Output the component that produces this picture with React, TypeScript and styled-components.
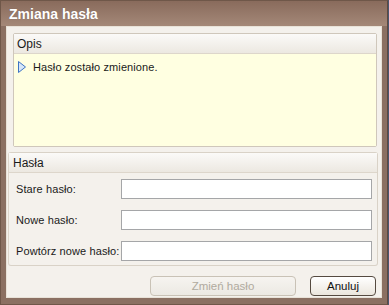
import styled, { createGlobalStyle } from 'styled-components';

const GlobalStyle = createGlobalStyle`
  html, body {
    margin: 0;
    padding: 0;
    background: #4b5670;
  }
  body {
    font-family: 'Liberation Sans', Arial, sans-serif;
    font-size: 12px;
    color: #1a1a1a;
  }
`;

const Window = styled.div`
  width: 388px;
  height: 305px;
  box-sizing: border-box;
  display: flex;
  flex-direction: column;
  background: #8b7062;
  border: 1px solid #6f5749;
  border-right-color: #5e4a3f;
  padding: 0 5px 6px 5px;
`;

const TitleBar = styled.div`
  height: 25px;
  margin: 0 -5px;
  padding: 0 8px;
  display: flex;
  align-items: center;
  background: linear-gradient(#896b5c, #a48878);
  color: #ffffff;
  font-weight: bold;
  font-size: 14px;
  text-shadow: 0 0 1px rgba(0, 0, 0, 0.2);
`;

const Body = styled.div`
  flex: 1;
  background: #f4f1ec;
  border: 1px solid #e8e2d8;
  display: flex;
  flex-direction: column;
  padding: 6px 2px 0 1px;
`;

const Panel = styled.div`
  margin: 0 2px 0 5px;
  border: 1px solid #cfc7bb;
  border-radius: 2px;
  display: flex;
  flex-direction: column;
`;

const PanelHeader = styled.div`
  height: 19px;
  display: flex;
  align-items: center;
  padding: 0 3px;
  background: linear-gradient(#fbfaf8, #ece8e1);
  border-bottom: 1px solid #ddd6cb;
  font-size: 12px;
`;

const MessageArea = styled.div`
  height: 92px;
  background: #ffffe1;
  padding: 7px 4px;
  box-sizing: border-box;
`;

const Message = styled.div`
  display: flex;
  align-items: center;
  gap: 7px;
  font-size: 11px;
  letter-spacing: 0.1px;
`;

const Section = styled.div`
  margin-top: 5px;
  border: 1px solid #d9d2c7;
  border-left: 1px solid #ddd6cb;
  border-radius: 3px;
  height: 114px;
  box-sizing: border-box;
  margin-right: 1px;
`;

const SectionHeader = styled(PanelHeader)`
  padding: 0 4px;
`;

const Form = styled.div`
  display: grid;
  grid-template-columns: 105px 1fr;
  row-gap: 11px;
  padding: 6px 5px 0 7px;
  align-items: center;
`;

const Label = styled.label`
  font-size: 11px;
  letter-spacing: 0.1px;
`;

const Input = styled.input`
  height: 20px;
  box-sizing: border-box;
  border: 1px solid #a5a6a8;
  background: #ffffff;
  padding: 0 3px;
  font-family: inherit;
  outline: none;
`;

const Footer = styled.div`
  display: flex;
  justify-content: flex-end;
  gap: 14px;
  padding: 10px 3px 0 0;
`;

const Button = styled.button<{ $width: number }>`
  width: ${(p) => p.$width}px;
  height: 20px;
  border-radius: 4px;
  border: 1px solid ${(p) => (p.disabled ? '#c9c2b6' : '#554a40')};
  background: ${(p) =>
    p.disabled ? 'linear-gradient(#f6f4f0, #ece9e3)' : 'linear-gradient(#ffffff, #ebe6dd)'};
  color: ${(p) => (p.disabled ? '#b0aa9e' : '#111111')};
  font-family: inherit;
  font-size: 11.5px;
  padding: 0;
`;

function Triangle() {
  return (
    <svg width="8" height="12" viewBox="0 0 8 12">
      <path d="M0.5 0.5 L7.5 6 L0.5 11.5 Z" fill="#d6e6f8" stroke="#3d74c4" strokeWidth="1" />
    </svg>
  );
}

export default function App() {
  return (
    <>
      <GlobalStyle />
      <Window>
        <TitleBar>Zmiana hasła</TitleBar>
        <Body>
          <Panel>
            <PanelHeader>Opis</PanelHeader>
            <MessageArea>
              <Message>
                <Triangle />
                Hasło zostało zmienione.
              </Message>
            </MessageArea>
          </Panel>
          <Section>
            <SectionHeader>Hasła</SectionHeader>
            <Form>
              <Label>Stare hasło:</Label>
              <Input type="password" autoFocus />
              <Label>Nowe hasło:</Label>
              <Input type="password" />
              <Label>Powtórz nowe hasło:</Label>
              <Input type="password" />
            </Form>
          </Section>
          <Footer>
            <Button $width={146} disabled>
              Zmień hasło
            </Button>
            <Button $width={66}>Anuluj</Button>
          </Footer>
        </Body>
      </Window>
    </>
  );
}
